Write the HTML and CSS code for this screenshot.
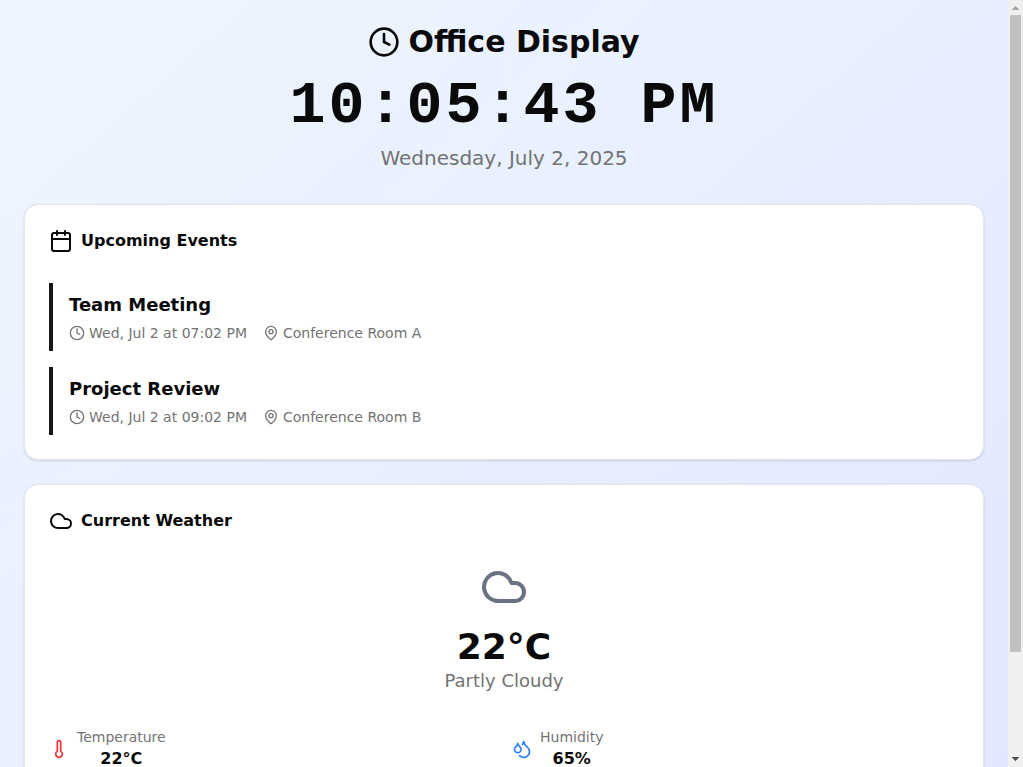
FILE: index.html
```
<!DOCTYPE html>
<html lang="en">
<head>
<meta charset="utf-8">
<title>Office Display</title>
<link rel="stylesheet" href="styles.css">
</head>
<body>
<svg class="defs" aria-hidden="true">
  <symbol id="clock" viewBox="0 0 24 24"><circle cx="12" cy="12" r="10"/><path d="M12 6v6l4 2"/></symbol>
  <symbol id="calendar" viewBox="0 0 24 24"><path d="M8 2v4M16 2v4"/><rect width="18" height="18" x="3" y="4" rx="2"/><path d="M3 10h18"/></symbol>
  <symbol id="pin" viewBox="0 0 24 24"><path d="M20 10c0 4.993-5.539 10.193-7.399 11.799a1 1 0 0 1-1.202 0C9.539 20.193 4 14.993 4 10a8 8 0 0 1 16 0"/><circle cx="12" cy="10" r="3"/></symbol>
  <symbol id="cloud" viewBox="0 0 24 24"><path d="M17.5 19H9a7 7 0 1 1 6.71-9h1.79a4.5 4.5 0 1 1 0 9Z"/></symbol>
  <symbol id="thermometer" viewBox="0 0 24 24"><path d="M14 4v10.54a4 4 0 1 1-4 0V4a2 2 0 0 1 4 0Z"/></symbol>
  <symbol id="droplets" viewBox="0 0 24 24"><path d="M7 16.3c2.2 0 4-1.83 4-4.05 0-1.16-.57-2.26-1.71-3.19S7.29 6.75 7 5.3c-.29 1.45-1.14 2.84-2.29 3.76S3 11.1 3 12.25c0 2.22 1.8 4.05 4 4.05z"/><path d="M12.56 6.6A10.97 10.97 0 0 0 14 3.02c.5 2.5 2 4.9 4 6.5s3 3.5 3 5.5a6.98 6.98 0 0 1-11.91 4.97"/></symbol>
</svg>
<div class="viewport">
  <main class="page">
    <header class="hero">
      <h1 class="hero-title"><svg class="icon icon-xl"><use href="#clock"/></svg>Office Display</h1>
      <div class="hero-time">10:05:43 PM</div>
      <div class="hero-date">Wednesday, July 2, 2025</div>
    </header>
    <div class="cards">
      <section class="card">
        <h2 class="card-title"><svg class="icon icon-lg"><use href="#calendar"/></svg>Upcoming Events</h2>
        <div class="events">
          <article class="event">
            <h3 class="event-name">Team Meeting</h3>
            <div class="event-meta">
              <span class="meta"><svg class="icon icon-sm"><use href="#clock"/></svg>Wed, Jul 2 at 07:02 PM</span>
              <span class="meta"><svg class="icon icon-sm"><use href="#pin"/></svg>Conference Room A</span>
            </div>
          </article>
          <article class="event">
            <h3 class="event-name">Project Review</h3>
            <div class="event-meta">
              <span class="meta"><svg class="icon icon-sm"><use href="#clock"/></svg>Wed, Jul 2 at 09:02 PM</span>
              <span class="meta"><svg class="icon icon-sm"><use href="#pin"/></svg>Conference Room B</span>
            </div>
          </article>
        </div>
      </section>
      <section class="card card-weather">
        <h2 class="card-title"><svg class="icon icon-lg"><use href="#cloud"/></svg>Current Weather</h2>
        <div class="weather-now">
          <svg class="icon icon-hero"><use href="#cloud"/></svg>
          <div class="weather-temp">22°C</div>
          <div class="weather-desc">Partly Cloudy</div>
        </div>
        <div class="stats">
          <div class="stat"><svg class="icon icon-md red"><use href="#thermometer"/></svg>
            <div class="stat-text"><div class="stat-label">Temperature</div><div class="stat-value">22°C</div></div>
          </div>
          <div class="stat"><svg class="icon icon-md blue"><use href="#droplets"/></svg>
            <div class="stat-text"><div class="stat-label">Humidity</div><div class="stat-value">65%</div></div>
          </div>
        </div>
      </section>
    </div>
  </main>
  <div class="scrollbar">
    <svg class="arrow up" viewBox="0 0 15 15" shape-rendering="crispEdges"><path d="M7 6h1v1h1v1h1v1h1v1H4V9h1V8h1V7h1z"/></svg>
    <div class="thumb"></div>
    <svg class="arrow down" viewBox="0 0 15 15" shape-rendering="crispEdges"><path d="M4 5h7v1h-1v1H9v1H8v1H7V8H6V7H5V6H4z"/></svg>
  </div>
</div>
</body>
</html>
```
FILE: styles.css
```
* { box-sizing: border-box; margin: 0; padding: 0; }
html, body { height: 100%; overflow: hidden; }
body {
  font-family: "DejaVu Sans", sans-serif;
  font-size: 16px;
  line-height: 24px;
  color: #0a0a0a;
}
.defs { display: none; }
.viewport { display: flex; align-items: flex-start; height: 100vh; overflow: hidden; }
.page {
  flex: 1;
  min-width: 0;
  height: 887px;
  padding: 24px;
  background: linear-gradient(to bottom right in oklab, oklch(.97 .014 254.604), oklch(.93 .034 272.788));
}
.icon { flex: none; fill: none; stroke: currentColor; stroke-width: 2; stroke-linecap: round; stroke-linejoin: round; }
.icon-sm { width: 16px; height: 16px; }
.icon-md { width: 20px; height: 20px; }
.icon-lg { width: 24px; height: 24px; }
.icon-xl { width: 32px; height: 32px; }
.icon-hero { width: 48px; height: 48px; color: #6a7282; }
.red { color: #fb2c36; }
.blue { color: #2b7fff; }

.hero { display: flex; flex-direction: column; align-items: center; margin-bottom: 32px; }
.hero-title { display: flex; align-items: center; gap: 8px; margin-bottom: 16px; font-size: 30px; line-height: 36px; font-weight: 700; }
.hero-time { margin-bottom: 8px; font-family: "Liberation Mono", monospace; font-size: 60px; line-height: 60px; font-weight: 700; letter-spacing: 3px; }
.hero-date { font-size: 20px; line-height: 28px; color: #737373; }

.cards { display: flex; flex-direction: column; gap: 24px; }
.card {
  display: flex;
  flex-direction: column;
  gap: 30px;
  padding: 24px;
  background: #fff;
  border: 1px solid #e5e5e5;
  border-radius: 14px;
  box-shadow: 0 1px 3px 0 rgba(0, 0, 0, .1), 0 1px 2px -1px rgba(0, 0, 0, .1);
}
.card-weather { height: 379px; }
.card-title { display: flex; align-items: center; gap: 8px; font-size: 16px; line-height: 24px; font-weight: 600; }

.events { display: flex; flex-direction: column; gap: 16px; }
.event { display: flex; flex-direction: column; gap: 4px; padding: 8px 0 8px 16px; border-left: 4px solid #171717; }
.event-name { font-size: 18px; line-height: 28px; font-weight: 600; }
.event-meta { display: flex; gap: 16px; font-size: 14px; line-height: 20px; color: #737373; }
.meta { display: flex; align-items: center; gap: 4px; }

.weather-now { display: flex; flex-direction: column; align-items: center; }
.weather-temp { margin-top: 16px; font-size: 36px; line-height: 40px; font-weight: 700; }
.weather-desc { font-size: 18px; line-height: 28px; color: #737373; }
.stats { display: grid; grid-template-columns: 1fr 1fr; gap: 16px; margin-top: 2px; }
.stat { display: flex; align-items: center; gap: 8px; }
.stat-text { text-align: center; }
.stat-label { font-size: 14px; line-height: 20px; color: #737373; }
.stat-value { font-weight: 600; }

.scrollbar { display: flex; flex-direction: column; flex: none; width: 15px; height: 100vh; background: #f0f0f0; }
.arrow { flex: none; width: 15px; height: 15px; }
.up { fill: #a3a3a3; }
.down { margin-top: auto; fill: #505050; }
.thumb { height: 637px; margin: 0 2px; background: #c1c1c1; }
```
